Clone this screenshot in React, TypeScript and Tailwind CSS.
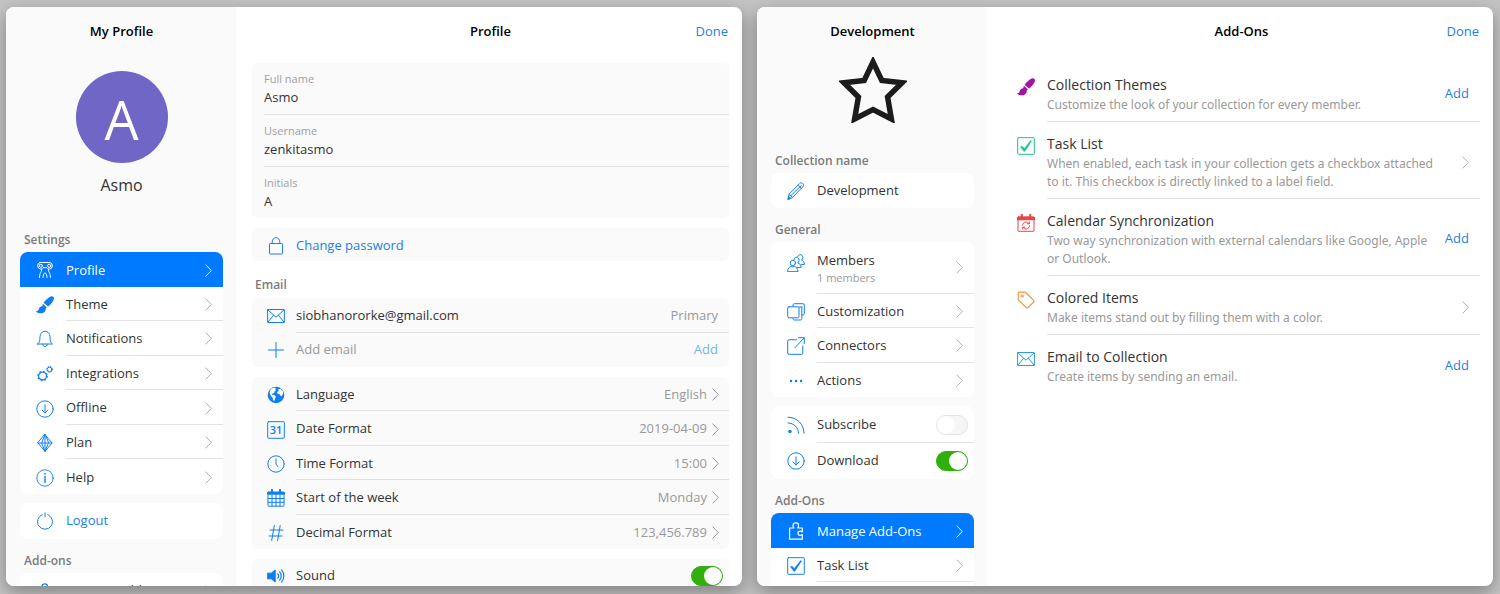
import React from 'react';

type IconProps = { className?: string; children: React.ReactNode };

const Icon: React.FC<IconProps> = ({ className = 'size-[18px]', children }) => (
  <svg
    viewBox="0 0 18 18"
    fill="none"
    stroke="currentColor"
    strokeWidth="1"
    strokeLinecap="round"
    strokeLinejoin="round"
    className={`shrink-0 ${className}`}
    aria-hidden="true"
  >
    {children}
  </svg>
);

const MaskIcon = () => (
  <Icon>
    <path d="M4 1.500h10a3.400 3.400 0 0 1-.6 6.600c-1.600 0-2.600-.7-3.200-1.900L9 7l-1.200-.8c-.6 1.200-1.600 1.900-3.200 1.900A3.400 3.400 0 0 1 4 1.500z" />
    <circle cx="4.800" cy="4.800" r="1.600" />
    <circle cx="13.200" cy="4.800" r="1.600" />
    <path d="M5.500 8.200c.2 1.700-.4 2.700-1 3.700-.5 1-.8 2-1 4.600M12.500 8.200c-.2 1.700.4 2.700 1 3.700.5 1 .8 2 1 4.600M7 16.500c.1-2.200.6-3.500 2-4.800 1.400 1.300 1.900 2.600 2 4.800" />
  </Icon>
);
const BrushIcon = () => (
  <Icon>
    <path
      d="M17.300.7c.9.900.9 2.300 0 3.900-1.200 2.300-2.900 4.200-5.300 6L7.600 6.700C9.400 4.300 11.400 2.300 13.600.9c1.500-.9 2.900-1 3.700-.2zM6.900 7.700l4 3.700-1.200.9c.3 1.600-.3 3.100-1.800 4.100-2.100 1.400-5.300 1.300-7.500-.4-.3-.3-.2-.9.3-1 1.200-.2 1.700-.7 2.100-2.100.5-1.700 1.800-2.600 3.400-2.600z"
      fill="currentColor"
      stroke="none"
    />
  </Icon>
);
const BellIcon = () => (
  <Icon>
    <path d="M1.500 14h15c-1.400-1.200-2.200-2-2.300-4.300L14 6.700C13.800 3.500 11.800 1.200 9 1.200S4.200 3.500 4 6.700l-.2 3C3.700 12 2.900 12.800 1.500 14zM6.800 14.200c.2 1.600 1 2.500 2.200 2.500s2-.9 2.200-2.500" />
  </Icon>
);
const GearsIcon = () => (
  <Icon>
    <circle cx="6.500" cy="11" r="3.900" strokeWidth="1.200" />
    <circle cx="6.500" cy="11" r="4.700" strokeWidth="1.400" strokeDasharray="1.500 2.200" strokeLinecap="butt" />
    <circle cx="13.600" cy="4.400" r="2.300" />
    <circle cx="13.600" cy="4.400" r="3" strokeDasharray="1.100 1.250" strokeLinecap="butt" />
  </Icon>
);
const DownloadIcon = () => (
  <Icon>
    <circle cx="9" cy="9" r="8.200" />
    <path d="M9 4.800v8M6 10l3 3 3-3" />
  </Icon>
);
const DiamondIcon = () => (
  <Icon>
    <path d="M9 .6L16 9l-7 8.400L2 9zM2 9h14M9 .6L5.600 9 9 17.400 12.400 9zM9 .6v16.800" />
  </Icon>
);
const InfoIcon = () => (
  <Icon>
    <circle cx="9" cy="9" r="8.200" strokeWidth=".9" />
    <path d="M9 7.500v6" strokeWidth="1.400" />
    <circle cx="9" cy="4.800" r=".6" fill="currentColor" strokeWidth=".5" />
  </Icon>
);
const PowerIcon = () => (
  <Icon>
    <path d="M6.300 2.700a7.500 7.500 0 1 0 5.400 0M9 .8v4" />
  </Icon>
);
const LockIcon = () => (
  <Icon>
    <rect x="2.500" y="6.500" width="13" height="10.500" rx=".8" />
    <path d="M5.200 6.500V5c0-2.600 1.600-4.300 3.800-4.300s3.800 1.700 3.800 4.300v1.500" />
  </Icon>
);
const MailIcon = () => (
  <Icon>
    <rect x=".6" y="2.500" width="16.800" height="13" rx=".5" />
    <path d="M1 3l8 7.200L17 3M1 15l5.600-6.700M17 15l-5.600-6.700" />
  </Icon>
);
const PlusIcon = () => (
  <Icon>
    <path d="M9 1.500v15M1.500 9h15" />
  </Icon>
);
const GlobeIcon = () => (
  <Icon>
    <circle cx="9" cy="9" r="8.300" fill="currentColor" stroke="none" />
    <path
      d="M3.600 3.200C5 2 6.800 1.700 8.200 1.700c.7.400.5 1 0 1.500l.9.900-1.600 1.300-.3 1.500-1.500.4-1 1.300 2.600.5 1.700 1.600-.8 1.500-1 2.800c-1.200-.6-1.400-2-1.500-3.300L3.600 9.500 2.500 6.600zM11 3.200l2.300-.5c1.500.9 2.400 2.100 2.900 3.500l-.6 2.600-1.600 1.700-1.300-2.300-2-.3-.6-2 1.700-1z"
      fill="#fff"
      stroke="none"
    />
  </Icon>
);
const DateIcon = () => (
  <Icon>
    <rect x=".7" y=".7" width="16.600" height="16.600" rx="1" />
    <text
      x="9"
      y="13.200"
      textAnchor="middle"
      fontSize="11"
      fontWeight="600"
      fill="currentColor"
      stroke="none"
    >
      31
    </text>
  </Icon>
);
const ClockIcon = () => (
  <Icon>
    <circle cx="9" cy="9" r="8.200" />
    <path d="M9 4v5.200l2 2.600" />
  </Icon>
);
const CalendarIcon = () => (
  <Icon>
    <rect x="1" y="3" width="16" height="14.200" rx=".5" />
    <path d="M1 4.400h16" strokeWidth="2.600" />
    <path d="M1 9.500h16M1 13.300h16M5 6v11M9 6v11M13 6v11" />
    <path d="M5 .9v3M13 .9v3" strokeWidth="2" />
  </Icon>
);
const HashIcon = () => (
  <Icon>
    <path d="M7.300 1.500L4.700 16.500M13.200 1.500l-2.600 15M3 6h13M2 12h13" />
  </Icon>
);
const SoundIcon = () => (
  <Icon>
    <path d="M.8 6.200h3.400L8.200 3v12l-4-3.200H.8z" fill="currentColor" />
    <path
      d="M10.800 6.800c.9 1.200.9 3.200 0 4.400M12.700 4.800c2 2.300 2 6.100 0 8.400M14.600 2.900c3 3.500 3 8.700 0 12.200"
      strokeWidth="1.200"
    />
  </Icon>
);
const PencilIcon = () => (
  <Icon>
    <path d="M1 17l1.200-5L12.800 1.400c.9-.9 2.200-.6 3 .2s1.100 2.100.2 3L5.500 15.500zM2.200 12l3.300 3.500M11 3.200l3.500 3.400M4 13.500L14.200 3.600" />
    <path d="M1 17l.7-2.500L3.300 16z" fill="currentColor" />
  </Icon>
);
const PeopleIcon = () => (
  <Icon>
    <circle cx="5.800" cy="9" r="2.700" />
    <path d="M.6 17.300c0-2.800 1.600-4.200 3.600-4.800 1 .5 2.200.5 3.200 0 2 .6 3.600 2 3.600 4.800z" />
    <path d="M7 5.600c.3-1.500 1.300-2.300 2.500-2.300 1.500 0 2.600 1.200 2.600 2.800 0 1.400-.7 2.300-1.400 2.900 2 .6 3.400 2 3.400 4.400H10" />
    <path d="M10.700 2.600C11.200 1.300 12.100.7 13.200.7c1.500 0 2.600 1.200 2.600 2.700 0 1.300-.6 2.200-1.300 2.800 1.800.5 3 1.800 3 4.200h-3.400" />
  </Icon>
);
const CopyIcon = () => (
  <Icon>
    <rect x=".7" y="3.800" width="11.300" height="11" rx="1.300" />
    <path d="M6 3.500V2C6 1.200 6.500.7 7.300.7h8.700c.8 0 1.300.5 1.300 1.300v8.700c0 .8-.5 1.300-1.300 1.300h-1.300M14.800 4v11.700c0 .8-.5 1.300-1.300 1.300H7.300c-.8 0-1.200-.5-1.300-1.300M12 4h2.800" />
  </Icon>
);
const ExternalIcon = () => (
  <Icon>
    <path d="M9.500 2.800H2c-.8 0-1.300.5-1.300 1.300V16c0 .8.500 1.300 1.300 1.300h12.500c.8 0 1.300-.5 1.300-1.300V9M8 10.700L17.200.8M11.500.7h5.800v5.800" />
  </Icon>
);
const DotsIcon = () => (
  <Icon>
    <path d="M4 9h.1M9 9h.1M14 9h.1" strokeWidth="2.400" />
  </Icon>
);
const FeedIcon = () => (
  <Icon>
    <path d="M1 1.200c9 0 16 7 16 16M1 7c6 0 10.500 4.500 10.500 10.300" />
    <circle cx="3" cy="15.500" r="1.700" fill="currentColor" stroke="none" />
  </Icon>
);
const PuzzleIcon = () => (
  <Icon>
    <path
      d="M2.600 6h4.300C6.300 5.100 6 4.300 6 3.400 6 1.900 7.200.8 8.800.8s2.800 1.100 2.800 2.600c0 .9-.3 1.700-.9 2.600h4.600v4c-.8-.6-1.400-.8-2.100-.8-1.300 0-2.200.9-2.200 2.100s.9 2.100 2.200 2.100c.7 0 1.300-.2 2.100-.8v4.600H2.600z"
      strokeWidth="1.200"
    />
  </Icon>
);
const CheckIcon = () => (
  <Icon>
    <rect x=".7" y=".7" width="16.600" height="16.600" rx=".8" />
    <path d="M3.600 9.700l1.200-.8 2.500 2.500 6.300-7.900 1 .6-6.700 10.200h-1z" fill="currentColor" strokeWidth=".4" />
  </Icon>
);
const SyncCalendarIcon = () => (
  <Icon>
    <rect x="1" y="2.800" width="16" height="14.500" rx=".5" />
    <path d="M1 4.600h16" strokeWidth="3.200" />
    <path d="M4.800.8v3M13.200.8v3" strokeWidth="2" />
    <path d="M5.500 11.200c.2-2 1.700-3.200 3.500-3.200 1.300 0 2.300.6 3 1.600M12.500 11.800c-.2 2-1.700 3.200-3.500 3.200-1.300 0-2.300-.6-3-1.600M12.300 7.800v2h-2M5.700 15.200v-2h2" />
  </Icon>
);
const TagIcon = () => (
  <Icon>
    <path
      d="M1.200 2.700v5.200c0 .5.200.9.500 1.200l7.500 7.600c.5.500 1.200.5 1.700 0l5.700-5.700c.5-.5.500-1.200 0-1.700L9 1.800C8.700 1.400 8.300 1.200 7.800 1.200H2.700c-.9 0-1.500.6-1.500 1.500z"
      strokeWidth="1.200"
    />
    <circle cx="5" cy="5" r="1.200" />
  </Icon>
);
const StarIcon = () => (
  <svg viewBox="0 0 68 66" className="h-[66px] w-[68px] text-[#1c1c1c]" aria-hidden="true">
    <path
      d="M34 5l8.800 18.500L63 25.800 48.600 40l3.800 22L34 52.500 15.600 62l3.800-22L5 25.800l20.200-2.300z"
      fill="none"
      stroke="currentColor"
      strokeWidth="5.500"
      strokeLinejoin="miter"
      strokeMiterlimit="2.500"
    />
  </svg>
);

const Chevron = () => (
  <svg viewBox="0 0 7 13" className="h-[13px] w-[7px] shrink-0" fill="none" stroke="currentColor" aria-hidden="true">
    <path d="M.6.6l5.700 5.900L.6 12.400" />
  </svg>
);

interface SwitchProps {
  label: string;
  defaultChecked?: boolean;
}

const Switch: React.FC<SwitchProps> = ({ label, defaultChecked }) => (
  <input
    type="checkbox"
    role="switch"
    aria-label={label}
    defaultChecked={defaultChecked}
    className="h-5 w-8 shrink-0 appearance-none rounded-full border border-[#e4e4e4] bg-[#f6f6f6] before:block before:size-[18px] before:rounded-full before:bg-white checked:border-[#2fb00c] checked:bg-[#2fb00c] checked:before:ml-3"
  />
);

const SectionLabel: React.FC<{ children: React.ReactNode }> = ({ children }) => (
  <h3 className="mt-3 mb-0.5 pl-1 text-[12px] leading-5 font-semibold text-[#7b7b7b]">{children}</h3>
);

interface MenuItemProps {
  icon: React.ReactNode;
  label: string;
  active?: boolean;
  last?: boolean;
}

const MenuItem: React.FC<MenuItemProps> = ({ icon, label, active, last }) => (
  <button
    type="button"
    className={`flex h-full w-full text-left ${active ? 'bg-[#007aff] text-white' : 'text-[#333]'}`}
  >
    <span
      className={`flex w-[46px] shrink-0 items-center justify-center pt-0.5 pl-1 ${active ? '' : 'text-[#0f7ff0]'}`}
    >
      {icon}
    </span>
    <span
      className={`flex flex-1 items-center justify-between pt-0.5 pr-[11px] ${
        active || last ? '' : 'border-b border-[#e3e3e3]'
      }`}
    >
      {label}
      <span className={active ? 'text-white' : 'text-[#b0b0b0]'}>
        <Chevron />
      </span>
    </span>
  </button>
);

interface SettingRowProps {
  icon: React.ReactNode;
  label: string;
  value: string;
  last?: boolean;
}

const SettingRow: React.FC<SettingRowProps> = ({ icon, label, value, last }) => (
  <button type="button" className="flex h-full w-full text-left">
    <span className="flex w-11 shrink-0 items-center justify-center pt-0.5 pl-[3px] text-[#0f7ff0]">{icon}</span>
    <span className={`flex flex-1 items-center pt-0.5 pr-[10px] ${last ? '' : 'border-b border-[#e0e0e0]'}`}>
      {label}
      <span className="ml-auto text-[#999]">{value}</span>
      <span className="ml-[5px] text-[#999]">
        <Chevron />
      </span>
    </span>
  </button>
);

interface FieldProps {
  id: string;
  label: string;
  value: string;
  last?: boolean;
}

const Field: React.FC<FieldProps> = ({ id, label, value, last }) => (
  <div className={`flex flex-col pt-2 pb-[7px] ${last ? '' : 'border-b border-[#e0e0e0]'}`}>
    <label htmlFor={id} className="text-[11px] leading-4 text-[#a0a0a0]">
      {label}
    </label>
    <input id={id} defaultValue={value} className="h-5 bg-transparent text-[13px] text-[#333] outline-none" />
  </div>
);

interface WindowProps {
  sideTitle: string;
  title: string;
  sidebar: React.ReactNode;
  children: React.ReactNode;
}

const SettingsWindow: React.FC<WindowProps> = ({ sideTitle, title, sidebar, children }) => (
  <section className="flex min-w-0 flex-1 overflow-hidden rounded-lg bg-white shadow-[0_6px_18px_rgba(0,0,0,0.35)]">
    <aside className="w-[230px] shrink-0 bg-[#fafafa] pr-[13px] pl-3.5">
      <h2 className="flex h-[50px] items-center justify-center font-semibold text-black">{sideTitle}</h2>
      {sidebar}
    </aside>
    <div className="min-w-0 flex-1 pr-[13px] pl-4">
      <header className="grid h-[50px] grid-cols-3 items-center">
        <h1 className="col-start-2 text-center font-semibold text-black">{title}</h1>
        <button type="button" className="justify-self-end pr-px text-[#1b7fe6]">
          Done
        </button>
      </header>
      {children}
    </div>
  </section>
);

const settingsMenu = [
  { icon: <MaskIcon />, label: 'Profile', active: true },
  { icon: <BrushIcon />, label: 'Theme' },
  { icon: <BellIcon />, label: 'Notifications' },
  { icon: <GearsIcon />, label: 'Integrations' },
  { icon: <DownloadIcon />, label: 'Offline' },
  { icon: <DiamondIcon />, label: 'Plan' },
  { icon: <InfoIcon />, label: 'Help' },
];

const formats = [
  { icon: <GlobeIcon />, label: 'Language', value: 'English' },
  { icon: <DateIcon />, label: 'Date Format', value: '2019-04-09' },
  { icon: <ClockIcon />, label: 'Time Format', value: '15:00' },
  { icon: <CalendarIcon />, label: 'Start of the week', value: 'Monday' },
  { icon: <HashIcon />, label: 'Decimal Format', value: '123,456.789' },
];

const addOns = [
  {
    icon: <BrushIcon />,
    color: 'text-[#a513a5]',
    title: 'Collection Themes',
    text: 'Customize the look of your collection for every member.',
    add: true,
  },
  {
    icon: <CheckIcon />,
    color: 'text-[#1fbf8f]',
    title: 'Task List',
    text: 'When enabled, each task in your collection gets a checkbox attached to it. This checkbox is directly linked to a label field.',
    add: false,
  },
  {
    icon: <SyncCalendarIcon />,
    color: 'text-[#e8464a]',
    title: 'Calendar Synchronization',
    text: 'Two way synchronization with external calendars like Google, Apple or Outlook.',
    add: true,
  },
  {
    icon: <TagIcon />,
    color: 'text-[#f0953c]',
    title: 'Colored Items',
    text: 'Make items stand out by filling them with a color.',
    add: false,
  },
  {
    icon: <MailIcon />,
    color: 'text-[#2a9be0]',
    title: 'Email to Collection',
    text: 'Create items by sending an email.',
    add: true,
  },
];

const ProfileSidebar = () => (
  <>
    <div className="flex flex-col items-center pt-3.5">
      <div className="flex size-[92px] items-center justify-center rounded-full bg-[#7066c6] pt-1 text-[54px] text-white">
        A
      </div>
      <p className="mt-2 text-[16px] leading-7 text-[#333]">Asmo</p>
    </div>
    <div className="pt-[19px]">
      <SectionLabel>Settings</SectionLabel>
    </div>
    <nav className="grid h-[242px] auto-rows-fr overflow-hidden rounded-lg bg-white">
      {settingsMenu.map((item, i) => (
        <MenuItem key={item.label} {...item} last={i === settingsMenu.length - 1} />
      ))}
    </nav>
    <button
      type="button"
      className="mt-[9px] flex h-9 w-full items-center rounded-lg bg-white text-left text-[#1b7fe6]"
    >
      <span className="flex w-[46px] justify-center pl-1">
        <PowerIcon />
      </span>
      Logout
    </button>
    <SectionLabel>Add-ons</SectionLabel>
    <nav className="h-[35px] overflow-hidden rounded-lg bg-white">
      <MenuItem icon={<PuzzleIcon />} label="Manage Add-Ons" />
    </nav>
  </>
);

const ProfileForm = () => (
  <form className="pt-1.5">
    <div className="rounded-md bg-[#fafafa] pl-3">
      <Field id="full-name" label="Full name" value="Asmo" />
      <Field id="username" label="Username" value="zenkitasmo" />
      <Field id="initials" label="Initials" value="A" last />
    </div>
    <button
      type="button"
      className="mt-2.5 flex h-[33px] w-full items-center rounded-md bg-[#fafafa] pt-0.5 text-left text-[#1b7fe6]"
    >
      <span className="flex w-11 justify-center pl-[3px]">
        <LockIcon />
      </span>
      Change password
    </button>
    <h3 className="mt-3.5 mb-[3px] pl-[3px] text-[12px] leading-5 font-semibold text-[#7b7b7b]">Email</h3>
    <div className="grid h-[69px] grid-rows-2 rounded-md bg-[#fafafa]">
      <div className="flex">
        <span className="flex w-11 shrink-0 items-center justify-center pt-0.5 pl-[3px] text-[#0f7ff0]">
          <MailIcon />
        </span>
        <span className="flex flex-1 items-center justify-between border-b border-[#e0e0e0] pt-0.5 pr-[11px] text-[#333]">
          siobhanororke@gmail.com
          <span className="text-[#999]">Primary</span>
        </span>
      </div>
      <div className="flex items-center pr-[11px]">
        <label htmlFor="new-email" className="flex w-11 shrink-0 justify-center pl-[3px] text-[#0f7ff0]">
          <PlusIcon />
        </label>
        <input
          id="new-email"
          type="email"
          aria-label="Add email"
          placeholder="Add email"
          className="min-w-0 flex-1 bg-transparent outline-none placeholder:text-[#999]"
        />
        <button type="button" className="text-[#74b4ee]">
          Add
        </button>
      </div>
    </div>
    <div className="mt-2.5 grid h-[172px] auto-rows-fr rounded-md bg-[#fafafa]">
      {formats.map((item, i) => (
        <SettingRow key={item.label} {...item} last={i === formats.length - 1} />
      ))}
    </div>
    <div className="mt-2.5 flex h-[34px] items-center rounded-md bg-[#fafafa] pr-1.5">
      <span className="flex w-11 justify-center pl-[3px] text-[#0f7ff0]">
        <SoundIcon />
      </span>
      Sound
      <span className="ml-auto flex">
        <Switch label="Sound" defaultChecked />
      </span>
    </div>
  </form>
);

const CollectionSidebar = () => (
  <>
    <div className="flex h-[82px] justify-center">
      <StarIcon />
    </div>
    <SectionLabel>Collection name</SectionLabel>
    <label className="flex h-[35px] items-center rounded-lg bg-white">
      <span className="flex w-[46px] shrink-0 justify-center pl-1 text-[#0f7ff0]">
        <PencilIcon />
      </span>
      <input
        aria-label="Collection name"
        defaultValue="Development"
        className="min-w-0 flex-1 bg-transparent outline-none"
      />
    </label>
    <SectionLabel>General</SectionLabel>
    <nav className="rounded-lg bg-white">
      <button type="button" className="flex h-[52px] w-full text-left">
        <span className="flex w-[46px] shrink-0 justify-center pt-3 pl-1 text-[#0f7ff0]">
          <PeopleIcon />
        </span>
        <span className="flex flex-1 items-center justify-between border-b border-[#e3e3e3] pr-[11px]">
          <span className="flex flex-col">
            <span className="leading-5">Members</span>
            <span className="text-[11px] leading-4 text-[#999]">1 members</span>
          </span>
          <span className="text-[#b0b0b0]">
            <Chevron />
          </span>
        </span>
      </button>
      <div className="grid h-[103px] auto-rows-fr">
        <MenuItem icon={<CopyIcon />} label="Customization" />
        <MenuItem icon={<ExternalIcon />} label="Connectors" />
        <MenuItem icon={<DotsIcon />} label="Actions" last />
      </div>
    </nav>
    <div className="mt-[9px] grid h-[73px] auto-rows-fr rounded-lg bg-white">
      <div className="flex">
        <span className="flex w-[46px] shrink-0 items-center justify-center pt-0.5 pl-1 text-[#0f7ff0]">
          <FeedIcon />
        </span>
        <span className="flex flex-1 items-center justify-between border-b border-[#e3e3e3] pt-0.5 pr-1.5">
          Subscribe
          <Switch label="Subscribe" />
        </span>
      </div>
      <div className="flex">
        <span className="flex w-[46px] shrink-0 items-center justify-center pl-1 text-[#0f7ff0]">
          <DownloadIcon />
        </span>
        <span className="flex flex-1 items-center justify-between pr-1.5">
          Download
          <Switch label="Download" defaultChecked />
        </span>
      </div>
    </div>
    <SectionLabel>Add-Ons</SectionLabel>
    <nav className="grid h-[104px] grid-rows-3 overflow-hidden rounded-lg bg-white">
      <MenuItem icon={<PuzzleIcon />} label="Manage Add-Ons" active />
      <MenuItem icon={<CheckIcon />} label="Task List" />
    </nav>
  </>
);

const AddOnList = () => (
  <ul className="pt-1.5">
    {addOns.map((item, i) => (
      <li key={item.title} className="flex">
        <span className={`flex w-11 shrink-0 items-start justify-center pt-[15px] pl-0.5 ${item.color}`}>
          {item.icon}
        </span>
        <div
          className={`flex flex-1 items-center justify-between gap-2 pt-[11px] pr-[11px] pb-[7px] ${
            i < addOns.length - 1 ? 'border-b border-[#e3e3e3]' : ''
          }`}
        >
          <div className="max-w-[394px]">
            <h3 className="text-[14px] leading-[22px] text-[#333]">{item.title}</h3>
            <p className="font-['Noto_Sans',sans-serif] text-[12px] leading-[18px] text-[#999]">{item.text}</p>
          </div>
          {item.add ? (
            <button type="button" className="text-[#1b7fe6]">
              Add
            </button>
          ) : (
            <button type="button" aria-label={`Open ${item.title}`} className="text-[#b0b0b0]">
              <Chevron />
            </button>
          )}
        </div>
      </li>
    ))}
  </ul>
);

export default function App() {
  return (
    <main className="flex h-screen gap-[15px] overflow-hidden bg-[#c4c4c4] pt-[7px] pr-[7px] pb-2 pl-1.5 font-['Open_Sans','Noto_Sans',sans-serif] text-[13px] text-[#333]">
      <SettingsWindow sideTitle="My Profile" title="Profile" sidebar={<ProfileSidebar />}>
        <ProfileForm />
      </SettingsWindow>
      <SettingsWindow sideTitle="Development" title="Add-Ons" sidebar={<CollectionSidebar />}>
        <AddOnList />
      </SettingsWindow>
    </main>
  );
}
